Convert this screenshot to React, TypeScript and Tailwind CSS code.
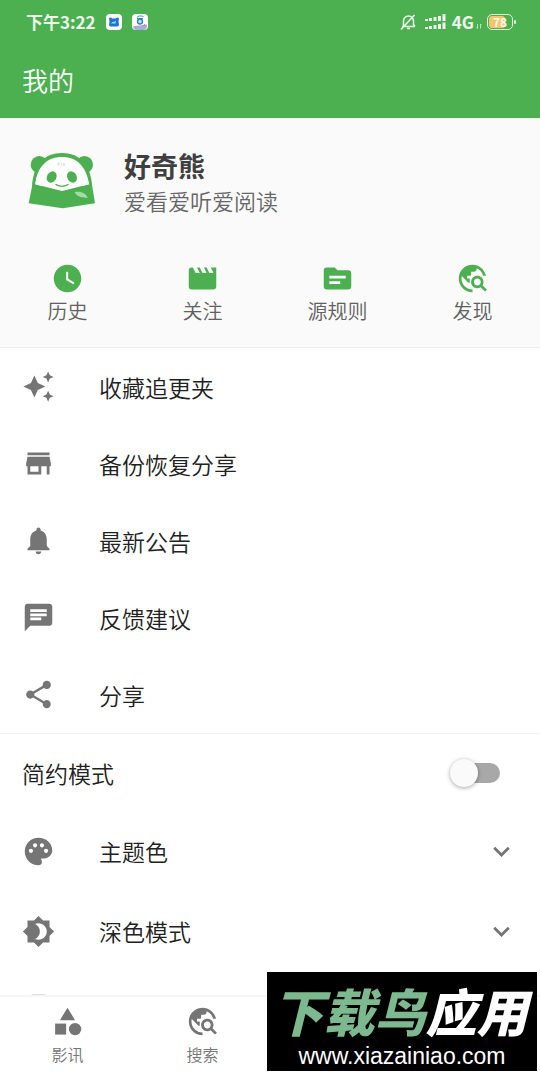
import { useState } from "react";
import type { IconType } from "react-icons";
import {
    MdAutoAwesome,
    MdBrightness4,
    MdCategory,
    MdChat,
    MdExpandMore,
    MdMovie,
    MdNotifications,
    MdPalette,
    MdPhoneAndroid,
    MdShare,
    MdSource,
    MdStore,
    MdTravelExplore,
    MdWatchLater,
} from "react-icons/md";

type Item = { label: string; icon: IconType };

const shortcuts: Item[] = [
    { label: "历史", icon: MdWatchLater },
    { label: "关注", icon: MdMovie },
    { label: "源规则", icon: MdSource },
    { label: "发现", icon: MdTravelExplore },
];

const menu: Item[] = [
    { label: "收藏追更夹", icon: MdAutoAwesome },
    { label: "备份恢复分享", icon: MdStore },
    { label: "最新公告", icon: MdNotifications },
    { label: "反馈建议", icon: MdChat },
    { label: "分享", icon: MdShare },
];

const settings: Item[] = [
    { label: "主题色", icon: MdPalette },
    { label: "深色模式", icon: MdBrightness4 },
];

const tabs: Item[] = [
    { label: "影讯", icon: MdCategory },
    { label: "搜索", icon: MdTravelExplore },
];

function StatusBar() {
    return (
        <div className="flex h-11 items-center justify-between pl-[26px] pr-[27px] text-white/90">
            <div className="flex items-center gap-[10px]">
                <span className="text-[17px] font-bold leading-6">下午3:22</span>
                <svg viewBox="0 0 16 16" className="size-4" aria-hidden="true">
                    <rect width="16" height="16" rx="4" fill="#fff" />
                    <path d="M3 4l2-.5L6 4.500h4l1-1 2 .5-.5 3.500.5 4-1.500 1h-7l-1.500-1 .5-4z" fill="#1d74d2" />
                    <path d="M5 9.500c1-1.500 2-2 3-1.500l2-1.500-.5 3z" fill="#a9d2f8" />
                </svg>
                <svg viewBox="0 0 16 16" className="size-4" aria-hidden="true">
                    <rect width="16" height="16" rx="4" fill="#fff" />
                    <path d="M5 3.500C6 1.800 9 1.500 11.500 2.500M5 4.500h6" stroke="#3b8cc0" fill="none" />
                    <circle cx="8" cy="7.500" r="2.500" stroke="#2d7fb5" strokeWidth="1.300" fill="#bfe1f2" />
                    <path d="M1 12.500c4-1.500 9-.5 14-2V12a4 4 0 0 1-4 4H5a4 4 0 0 1-4-3.500z" fill="#a9aed6" />
                    <path d="M9 12l4-2 .5 1.500z" fill="#d86a75" />
                </svg>
            </div>
            <div className="flex items-center">
                <svg viewBox="0 0 17 18" className="mr-[7px] h-[18px] w-[17px]" fill="none" stroke="currentColor" strokeWidth="1.500" aria-hidden="true">
                    <path d="M2 13.500h13M3.500 13V8a5 5 0 0 1 10 0v3.500L15 13.500M7 15.500h3M1 16.500L14.500 2" />
                </svg>
                <svg viewBox="0 0 22 16" className="mr-1.5 h-4 w-[22px]" fill="currentColor" aria-hidden="true">
                    <path d="M1 5h3v2H1zM5 4h3v3H5zM9.500 3h3v4h-3zM14 2h3v5h-3zM18.500 0h3v7h-3zM1 13h3v2H1zM5 12h3v3H5zM9.500 11h3v4h-3zM14 10h3v5h-3zM18.500 8.500h3V15h-3z" />
                </svg>
                <span className="text-[17px] font-bold leading-6">4G</span>
                <svg viewBox="0 0 6 6" className="mr-[5px] ml-0.5 mt-2 size-1.5" stroke="currentColor" fill="none" opacity=".7" aria-hidden="true">
                    <path d="M1.500 1v4.500L.5 4.500M4.500 5.500V1l1 1" />
                </svg>
                <div className="relative flex h-4 w-[26px] items-center justify-center rounded-[5px] border border-[#e4f5d8]">
                    <span className="absolute inset-y-px left-px w-4 rounded-[3px] bg-[#f3c66c]" />
                    <span className="relative text-[12px] font-bold leading-3">78</span>
                    <span className="absolute -right-1 h-1 w-0.5 rounded-full bg-[#e4f5d8]" />
                </div>
            </div>
        </div>
    );
}

function PandaLogo() {
    return (
        <svg viewBox="0 0 204 174" className="mt-1 h-[58px] w-[68px] shrink-0" role="img" aria-label="好奇熊">
            <g fill="#4caf50">
                <circle cx="34" cy="38" r="26" />
                <circle cx="169" cy="38" r="26" />
                <path d="M12 104C16 36 50 3 102 3s86 33 91 101l8 50-97 15L2 154z" />
            </g>
            <path d="M22 97C27 50 54 31 102 31s73 20 81 66l-81 20z" fill="#fff" />
            <g fill="#4caf50">
                <ellipse cx="71" cy="75" rx="14" ry="18" transform="rotate(28 71 75)" />
                <ellipse cx="132" cy="75" rx="14" ry="18" transform="rotate(-28 132 75)" />
            </g>
            <path d="M22 97C27 45 56 15 102 15s73 30 81 82l-20 5-123 0z" fill="#fff" />
            <g fill="#4caf50">
                <ellipse cx="71" cy="75" rx="14" ry="18" transform="rotate(28 71 75)" />
                <ellipse cx="132" cy="75" rx="14" ry="18" transform="rotate(-28 132 75)" />
            </g>
            <path d="M84 98q18 10 36 0" stroke="#4caf50" strokeWidth="4" fill="none" strokeLinecap="round" />
            <path d="M90 33v9M90 33h6M90 37h5M100 33v9M105 33l6 9M111 33l-6 9" stroke="#b9c7b9" strokeWidth="1.500" fill="none" />
            <path d="M140 120c17-4 35 3 39 18-15-1-33-3-39-18z" fill="#a5dba8" />
        </svg>
    );
}

function Profile() {
    return (
        <section className="border-b border-[#f0f0f0] bg-[#fafafa] pt-[30px]">
            <div className="flex items-start gap-7 pl-7">
                <PandaLogo />
                <div>
                    <h2 className="text-[27px] font-bold leading-9 text-[#3f3f3f]">好奇熊</h2>
                    <p className="text-[22px] leading-8 text-[#666]">爱看爱听爱阅读</p>
                </div>
            </div>
            <div className="mt-[46px] grid grid-cols-4 pb-5">
                {shortcuts.map(({ label, icon: Icon }) => (
                    <button key={label} className="flex flex-col items-center">
                        <Icon className="size-[33px] text-[#4caf50]" />
                        <span className="text-[20px] leading-8 text-[#616161]">{label}</span>
                    </button>
                ))}
            </div>
        </section>
    );
}

function MenuList() {
    return (
        <ul className="border-b border-[#f0f0f0]">
            {menu.map(({ label, icon: Icon }) => (
                <li key={label}>
                    <button className="flex h-[77px] w-full items-center gap-11 px-[22px]">
                        <Icon className="size-[33px] text-[#757575]" />
                        <span className="text-[23px] leading-8">{label}</span>
                    </button>
                </li>
            ))}
        </ul>
    );
}

function Settings() {
    const [simple, setSimple] = useState(false);

    return (
        <section>
            <label className="flex h-[77px] items-center justify-between pr-10 pl-[22px]">
                <span className="text-[23px] leading-8">简约模式</span>
                <input
                    type="checkbox"
                    role="switch"
                    checked={simple}
                    onChange={(e) => setSimple(e.target.checked)}
                    className="flex h-5 w-[50px] appearance-none items-center rounded-full bg-[#a8a8a8] bg-clip-content pl-1 before:-ml-1 before:size-7 before:shrink-0 before:rounded-full before:bg-[#fafafa] before:shadow-[0_1px_4px_rgba(0,0,0,0.35)] checked:justify-end checked:bg-[#4caf50]"
                />
            </label>
            {settings.map(({ label, icon: Icon }) => (
                <button key={label} className="flex h-20 w-full items-center px-[22px]">
                    <Icon className="mr-11 size-[33px] text-[#757575]" />
                    <span className="text-[23px] leading-8">{label}</span>
                    <MdExpandMore className="ml-auto size-[33px] text-[#757575]" />
                </button>
            ))}
            <div className="flex h-[77px] items-center px-[22px]">
                <MdPhoneAndroid className="size-[33px] text-[#bdbdbd]" />
            </div>
        </section>
    );
}

function TabBar() {
    return (
        <nav className="grid h-[77px] shrink-0 grid-cols-4 border-t-2 border-[#f5f5f5] bg-white">
            {tabs.map(({ label, icon: Icon }) => (
                <button key={label} className="flex flex-col items-center pt-2 text-[#757575]">
                    <Icon className="size-[33px]" />
                    <span className="mt-1 text-[16px] leading-6">{label}</span>
                </button>
            ))}
        </nav>
    );
}

function Watermark() {
    return (
        <div className="absolute right-[3px] bottom-px flex h-[99px] w-[270px] flex-col items-center bg-black pt-1.5 text-white">
            <p className="pr-1 text-[51px] font-black italic leading-[64px] whitespace-nowrap">
                <span className="text-[#7cb98f]">下载鸟</span>应用
            </p>
            <p className="mt-0.5 font-['Liberation_Sans',sans-serif] text-[23px] leading-6">www.xiazainiao.com</p>
        </div>
    );
}

function App() {
    return (
        <div className="relative flex h-screen flex-col overflow-hidden bg-white font-['Noto_Sans_CJK_SC',sans-serif] font-[350] text-[#212121]">
            <header className="shrink-0 bg-[#4caf50] text-white">
                <StatusBar />
                <h1 className="flex h-[74px] items-center pb-0.5 pl-[22px] text-[26px] leading-10">我的</h1>
            </header>
            <main className="min-h-0 flex-1 overflow-hidden">
                <Profile />
                <MenuList />
                <Settings />
            </main>
            <TabBar />
            <Watermark />
        </div>
    );
}

export default App;
